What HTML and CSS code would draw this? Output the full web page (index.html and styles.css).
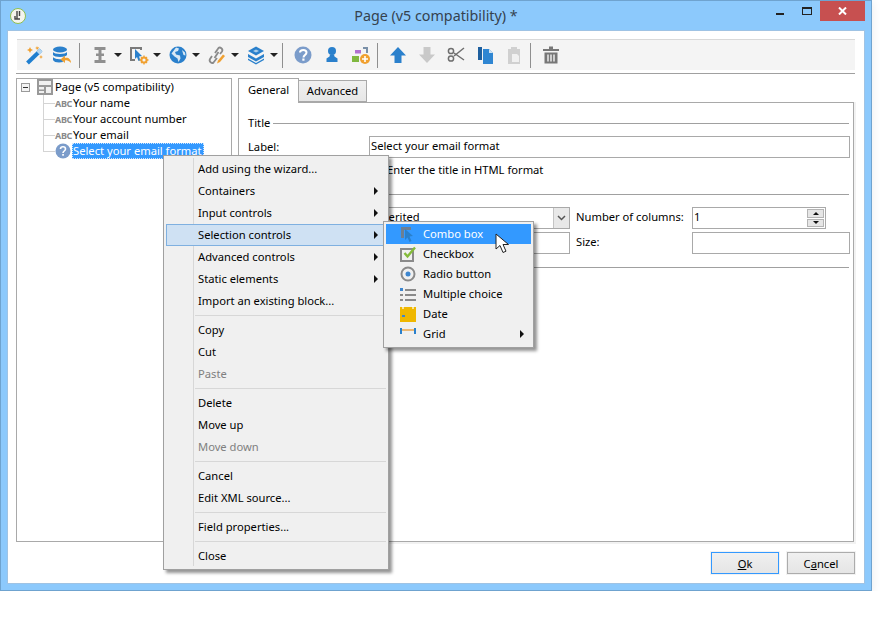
FILE: index.html
```html
<!DOCTYPE html>
<html lang="en">
<head>
<meta charset="utf-8">
<title>Page (v5 compatibility) *</title>
<link rel="stylesheet" href="styles.css">
</head>
<body>
<div class="window">
  <header class="titlebar">
    <svg class="app-icon" width="16" height="16" viewBox="0 0 16 16"><circle cx="8" cy="8" r="7.500" fill="#f4f4ee" stroke="#8fbf4f"/><path d="M7 3v8M9.500 3v5M5 8v3h5" fill="none" stroke="#444" stroke-width="1.400"/></svg>
    <span class="title-text">Page (v5 compatibility) *</span>
    <div class="win-controls">
      <span class="win-min"></span>
      <span class="win-max"></span>
      <span class="win-close"><svg width="9" height="8" viewBox="0 0 9 8"><path d="M1 .5l7 7M8 .5l-7 7" stroke="#fff" stroke-width="2"/></svg></span>
    </div>
  </header>
  <div class="client">
    <div class="toolbar">
      <div class="tgroup g8">
        <svg class="ti" viewBox="0 0 20 20"><path d="M3.500 18L17 5" stroke="#1f7fd0" stroke-width="4"/><path d="M14 8l3-3" stroke="#b5d6f0" stroke-width="4"/><path d="M6 2l1 2 2 1-2 1-1 2-1-2-2-1 2-1zM13 1l.6 1.400L15 2l-.6 1.600L13 5l-.6-1.400L11 3l1.400-.6zM17 10l.6 1.400 1.400.6-1.400.6-.6 1.400-.6-1.400-1.400-.6 1.400-.6z" fill="#f0a030"/></svg>
        <svg class="ti" viewBox="0 0 20 20"><ellipse cx="8" cy="4.500" rx="7" ry="3" fill="#2a80cc"/><path d="M1 7c1 2.500 13 2.500 14 0v3c-1 2.500-13 2.500-14 0zM1 12c1 2 7 2.500 9 2l1 3c-4 1-9 .5-10-2z" fill="#2a80cc"/><path d="M19 18c0-4-3-6-6-5v-2.500l-4.500 4 4.500 3.500v-2.500c2-.5 4 .5 6 2.500z" fill="#f0a030"/></svg>
      </div>
      <span class="tsep s7"></span>
      <div class="tgroup g7">
        <div class="tpair">
          <svg class="ti" viewBox="0 0 20 20"><path d="M4.500 2h11v3h-4v3.500H14v2.500h-2.500v4h4v3h-11v-3h4v-4H6V8.500h2.500V5h-4z" fill="#8f8f8f"/></svg>
          <span class="tcaret"></span>
        </div>
        <div class="tpair">
          <svg class="ti" viewBox="0 0 20 20"><path d="M1 2h12v3h-2V4H3v10h3v2H1z" fill="#7a7a7a"/><path d="M6 4l7 7-3 .5 1.500 4-2 .5-1.500-4L6 14z" fill="#2a80cc"/><circle cx="15" cy="15" r="2.600" fill="none" stroke="#f0a030" stroke-width="2"/><path d="M15 10.500V12M15 18v1.500M10.500 15H12M18 15h1.500M12 12l1 1M17 17l1 1M18 12l-1 1M13 17l-1 1" stroke="#f0a030" stroke-width="1.300"/></svg>
          <span class="tcaret"></span>
        </div>
        <div class="tpair">
          <svg class="ti" viewBox="0 0 20 20"><circle cx="10" cy="10" r="8.500" fill="#2a80cc"/><path d="M8 2.500l3 1-1 2.500-3 1 1 2.500 4 1 .5 3-2 3.500-1-3.500-3-2-3-3zM14 5l3 2.500.5 3-2-.5z" fill="#d8e8f5"/></svg>
          <span class="tcaret"></span>
        </div>
        <div class="tpair">
          <svg class="ti" viewBox="0 0 20 20"><path d="M8 8l3.500-5c1.500-1.500 5 1 3.500 3.500L13 9M10 13l-3.500 4.500c-1.500 1.500-5-1-3.500-3.500l2-3M7.500 13l4-6" fill="none" stroke="#8a8a8a" stroke-width="1.800"/><path d="M10 18.500l1-3 5-6 2 1.500-5 6z" fill="#f0a030"/></svg>
          <span class="tcaret"></span>
        </div>
        <div class="tpair">
          <svg class="ti" viewBox="0 0 20 20"><path d="M10 1.500l8 4.500-8 4.500L2 6z" fill="#2a80cc"/><path d="M10 4.500L13 6l-3 1.500L7 6z" fill="#a9cdea"/><path d="M2 9l8 4.500L18 9v3l-8 4.500L2 12z" fill="#2a80cc"/><path d="M2 13.500l8 4.500 8-4.500V15l-8 4.500L2 15z" fill="#2a80cc"/></svg>
          <span class="tcaret"></span>
        </div>
      </div>
      <span class="tsep s4"></span>
      <div class="tgroup g9">
        <svg class="ti" viewBox="0 0 20 20"><circle cx="10" cy="10" r="8.500" fill="#7b9cca"/><path d="M7 7.500c0-3.500 6.500-3.500 6.500 0 0 2.500-3 2.500-3 5" fill="none" stroke="#fff" stroke-width="2"/><rect x="9.300" y="13.500" width="2.200" height="2.200" fill="#fff"/></svg>
        <svg class="ti" viewBox="0 0 20 20"><circle cx="10" cy="6" r="4" fill="#2a80cc"/><path d="M8 9.500h4l.5 2 3 2V17H4.500v-3.500l3-2z" fill="#2a80cc"/></svg>
        <svg class="ti" viewBox="0 0 20 20"><rect x="4" y="5" width="6" height="3.500" fill="#b070d0"/><path d="M12 2h5v6h-2V4h-3z" fill="#7a90a8"/><rect x="1" y="11" width="7" height="6" fill="#80b840"/><circle cx="14" cy="14" r="5" fill="#f0a030"/><path d="M14 11v6M11 14h6" stroke="#fff" stroke-width="1.600"/></svg>
      </div>
      <span class="tsep s6"></span>
      <div class="tgroup g9">
        <svg class="ti" viewBox="0 0 20 20"><path d="M10 2l8 8.500h-4.500V18h-7v-7.500H2z" fill="#2a80cc"/></svg>
        <svg class="ti" viewBox="0 0 20 20"><path d="M10 18l-8-8.500h4.500V2h7v7.500H18z" fill="#c9c9c9"/></svg>
        <svg class="ti" viewBox="0 0 20 20"><path d="M18 3L8 11M18 15L8 8" stroke="#6e6e6e" stroke-width="1.500" fill="none"/><circle cx="5" cy="6" r="2.600" fill="none" stroke="#6e6e6e" stroke-width="1.500"/><circle cx="5" cy="13.500" r="2.600" fill="none" stroke="#6e6e6e" stroke-width="1.500"/></svg>
        <svg class="ti" viewBox="0 0 20 20"><path d="M3 2h4v13H3z" fill="#1e5f9e"/><path d="M8 4h6l4 4v11H8z" fill="#2f86d2"/><path d="M14 4l4 4h-4z" fill="#cfe3f4"/></svg>
        <svg class="ti" viewBox="0 0 20 20"><path d="M4 4h3V2h6v2h3v15H4z" fill="#d0d0d0"/><path d="M8 9h5l2 2v6H8z" fill="#f0f0f0"/></svg>
      </div>
      <span class="tsep s6"></span>
      <svg class="ti" viewBox="0 0 20 20"><path d="M8 1.500h4V4h6v2H2V4h6z" fill="#777"/><path d="M3.500 7.500h13v11h-13z" fill="#777"/><path d="M7 9.500v7M10 9.500v7M13 9.500v7" stroke="#f4f4f4" stroke-width="1.400"/></svg>
    </div>
    <div class="toolbar-rule"></div>

    <div class="panes">
      <div class="tree">
        <div class="tree-lines"></div>
        <div class="node root">
          <span class="expander"></span>
          <svg class="root-icon" width="16" height="16" viewBox="0 0 16 16"><rect width="16" height="16" fill="#999"/><rect x="2" y="2" width="12" height="4" fill="#f0f0f0"/><rect x="2" y="8" width="5" height="2.500" fill="#f0f0f0"/><rect x="2" y="12" width="5" height="2" fill="#f0f0f0"/><rect x="9" y="8" width="5" height="6" fill="#f0f0f0"/></svg>
          <span class="label">Page (v5 compatibility)</span>
        </div>
        <div class="node leaf"><span class="abc">ABC</span><span class="label">Your name</span></div>
        <div class="node leaf"><span class="abc">ABC</span><span class="label">Your account number</span></div>
        <div class="node leaf"><span class="abc">ABC</span><span class="label">Your email</span></div>
        <div class="node leaf">
          <svg class="q-icon" width="16" height="16" viewBox="0 0 16 16"><circle cx="8" cy="8" r="7.500" fill="#7b9cca"/><path d="M5.500 6c0-3 5-3 5 0 0 2-2.500 2-2.500 4" fill="none" stroke="#fff" stroke-width="1.600"/><rect x="7.200" y="11" width="1.700" height="1.700" fill="#fff"/></svg>
          <span class="selected">Select your email format</span>
        </div>
      </div>

      <div class="tabs-area">
        <div class="tabs">
          <span class="tab active">General</span>
          <span class="tab">Advanced</span>
        </div>
        <div class="tab-panel">
          <div class="legend"><span class="lift">Title</span></div>
          <div class="row first-row">
            <span class="field-label">Label:</span>
            <span class="input grow">Select your email format</span>
          </div>
          <div class="check-row">
            <span class="checkbox"></span>
            <span class="lift">Enter the title in HTML format</span>
          </div>
          <div class="legend second"></div>
          <div class="row first-row">
            <span class="field-label"></span>
            <span class="input select">Inherited<span class="select-btn"><svg width="9" height="6" viewBox="0 0 9 6"><path d="M1 1l3.500 3.500L8 1" fill="none" stroke="#555" stroke-width="1.500"/></svg></span></span>
            <span class="side-label">Number of columns:</span>
            <span class="input spin">1<span class="spin-btns"><span class="spin-up"></span><span class="spin-down"></span></span></span>
          </div>
          <div class="row next-row">
            <span class="field-label"></span>
            <span class="input select"></span>
            <span class="side-label">Size:</span>
            <span class="input grow"></span>
          </div>
          <div class="legend second-b"></div>
        </div>
      </div>
    </div>

    <div class="actions">
      <button class="btn default" type="button"><u>O</u>k</button>
      <button class="btn" type="button">C<u>a</u>ncel</button>
    </div>
  </div>

  <div class="menu main-menu">
    <div class="mi">Add using the wizard...</div>
    <div class="mi sub">Containers</div>
    <div class="mi sub">Input controls</div>
    <div class="mi sub hot">Selection controls</div>
    <div class="mi sub">Advanced controls</div>
    <div class="mi sub">Static elements</div>
    <div class="mi">Import an existing block...</div>
    <div class="msep"></div>
    <div class="mi">Copy</div>
    <div class="mi">Cut</div>
    <div class="mi off">Paste</div>
    <div class="msep"></div>
    <div class="mi">Delete</div>
    <div class="mi">Move up</div>
    <div class="mi off">Move down</div>
    <div class="msep"></div>
    <div class="mi">Cancel</div>
    <div class="mi">Edit XML source...</div>
    <div class="msep"></div>
    <div class="mi">Field properties...</div>
    <div class="msep"></div>
    <div class="mi">Close</div>
  </div>

  <div class="menu sub-menu">
    <div class="si hot-blue">
      <svg class="si-icon" viewBox="0 0 16 16"><path d="M1 1h10v3H4v8H1z" fill="#6d7f92"/><path d="M5 3l8 7-3.500.5 2 4.500-2 1-2-4.500L5 14z" fill="#2a80cc"/></svg>
      <span class="lift">Combo box</span>
    </div>
    <div class="si">
      <svg class="si-icon" viewBox="0 0 16 16"><rect x="1" y="3" width="12" height="12" fill="none" stroke="#8a8a8a" stroke-width="2"/><path d="M4.500 7l3 3.500L15 1.500" fill="none" stroke="#84bb3a" stroke-width="2.400"/></svg>
      <span class="lift">Checkbox</span>
    </div>
    <div class="si">
      <svg class="si-icon" viewBox="0 0 16 16"><circle cx="8" cy="8" r="6.500" fill="none" stroke="#8a8a8a" stroke-width="2"/><circle cx="8" cy="8" r="2.500" fill="#3d86cf"/></svg>
      <span class="lift">Radio button</span>
    </div>
    <div class="si">
      <svg class="si-icon" viewBox="0 0 16 16"><path d="M5 3h11v2H5zM5 8h11v2H5zM5 13h11v2H5z" fill="#8a8a8a"/><rect y="2" width="3" height="3" fill="#3d86cf"/><rect y="8" width="3" height="2" fill="#8a8a8a"/><rect y="13" width="3" height="2" fill="#8a8a8a"/></svg>
      <span class="lift">Multiple choice</span>
    </div>
    <div class="si">
      <svg class="si-icon" viewBox="0 0 16 16"><rect y="1" width="16" height="15" fill="#efb700"/><path d="M3 0v3M13 0v3" stroke="#fff" stroke-width="1.200"/><rect x="2" y="9" width="3" height="2" fill="#3d86cf"/></svg>
      <span class="lift">Date</span>
    </div>
    <div class="si sub">
      <svg class="si-icon" viewBox="0 0 16 16"><path d="M1 2v6M15 2v6" stroke="#2a80cc" stroke-width="2"/><path d="M2 4h12" stroke="#e8a040" stroke-width="1.400"/></svg>
      <span class="lift">Grid</span>
    </div>
  </div>

  <svg class="cursor" width="17" height="21" viewBox="0 0 17 21"><path d="M1 1v15l4-3.500 3 7 3-1.300-3-6.700h5.500z" fill="#fff" stroke="#222" stroke-width="1"/></svg>
</div>
</body>
</html>
```
FILE: styles.css
```css
* { box-sizing: border-box; }
html, body { margin: 0; padding: 0; background: #fff; }
body { font-family: "Noto Sans", sans-serif; font-size: 11.2px; color: #000; }

.window {
  position: relative;
  width: 872px;
  height: 591px;
  background: #8cc9fc;
  border: 1px solid #6fa3cf;
  box-shadow: 2px 2px 8px rgba(0,0,0,.06);
}

.titlebar { position: relative; height: 29px; display: flex; align-items: center; justify-content: center; }
.app-icon { position: absolute; left: 9px; top: 7px; }
.title-text { font-size: 14.3px; color: #35424f; margin-top: -1px; }
.win-controls { position: absolute; right: 6px; top: 0; display: flex; align-items: flex-start; }
.win-min { width: 8px; height: 2px; background: #222; margin-top: 12px; margin-right: 18px; }
.win-max { width: 10px; height: 8px; border: 1px solid #222; border-top-width: 2px; margin-top: 6px; margin-right: 8px; }
.win-close { width: 45px; height: 20px; background: #c75050; display: flex; align-items: center; justify-content: center; }

.client {
  width: 858px;
  height: 554px;
  margin-left: 6px;
  background: #fff;
  border: 1px solid #9fc3e4;
  padding: 8px 9px 0 8px;
}

.toolbar {
  height: 31px;
  margin-left: 1px;
  padding-left: 7px;
  background: #f4f4f4;
  border-top: 1px solid #d9d9d9;
  display: flex;
  align-items: center;
}
.toolbar-rule { height: 1px; background: #a0a0a0; margin-top: 3px; }
.tgroup { display: flex; align-items: center; }
.g7 { gap: 7px; }
.g8 { gap: 8px; }
.g9 { gap: 9px; }
.tpair { display: flex; align-items: center; gap: 4px; }
.ti { width: 20px; height: 20px; flex: none; display: block; }
.tcaret { width: 0; height: 0; border-left: 4px solid transparent; border-right: 4px solid transparent; border-top: 4px solid #222; }
.tsep { width: 1px; height: 25px; background: #8f8f8f; margin-right: 10px; }
.s7 { margin-left: 7px; }
.s4 { margin-left: 4px; }
.s6 { margin-left: 6px; }

.panes { display: flex; gap: 6px; height: 464px; margin-top: 4px; }

.tree {
  position: relative;
  width: 216px;
  border: 1px solid #a9a9a9;
  background: #fff;
}
.tree-lines { position: absolute; left: 26px; top: 16px; width: 12px; height: 56px; border-left: 1px solid #d4d4d4; }
.node { position: relative; height: 16px; display: flex; align-items: center; white-space: nowrap; }
.label { padding-bottom: 1px; }
.root { padding-left: 4px; }
.expander { position: relative; width: 9px; height: 9px; border: 1px solid #9a9a9a; background: #f4f4f4; margin-right: 7px; }
.expander::after { content: ""; position: absolute; left: 1px; top: 3px; width: 5px; height: 1px; background: #333; }
.root-icon { margin-right: 2px; }
.leaf { padding-left: 38px; }
.leaf::before { content: ""; position: absolute; left: 26px; top: 8px; width: 12px; height: 1px; background: #d4d4d4; }
.abc { position: relative; width: 18px; font-size: 9px; font-weight: 700; color: #8a8a8a; letter-spacing: -.3px; }
.q-icon { position: relative; margin-right: 1px; }
.selected { width: 132px; background: #3399ff; color: #fff; outline: 1px dotted #cfe6ff; outline-offset: -1px; height: 16px; line-height: 15px; padding: 0 1px; }

.tabs-area { width: 616px; display: flex; flex-direction: column; }
.tabs { display: flex; height: 24px; position: relative; z-index: 1; }
.tab {
  width: 68px;
  height: 22px;
  margin-top: 2px;
  padding-bottom: 1px;
  border: 1px solid #a9a9a9;
  border-left-width: 0;
  background: linear-gradient(#f0f0f0, #e6e6e6);
  display: flex;
  align-items: center;
  justify-content: center;
}
.tab.active { width: 61px; height: 25px; margin-top: 0; padding-bottom: 3px; background: #fff; border-left-width: 1px; border-bottom: 0; }
.tab-panel {
  flex: 1;
  border: 1px solid #a9a9a9;
  padding: 13px 4px 0 9px;
  box-shadow: 1px 1px 0 1px #f2f2f2;
}
.legend { height: 14px; display: flex; align-items: center; gap: 3px; }
.legend::after { content: ""; flex: 1; height: 1px; background: #a0a0a0; }
.lift { padding-bottom: 2px; }
.second { margin-top: 9px; }
.second-b { margin-top: 6px; }
.row { display: flex; align-items: center; height: 22px; }
.first-row { margin-top: 6px; }
.next-row { margin-top: 3px; }
.field-label { width: 121px; flex: none; padding-bottom: 2px; }
.input {
  height: 22px;
  border: 1px solid #a9a9a9;
  background: #fff;
  padding-left: 1px;
  line-height: 18px;
  display: flex;
  position: relative;
}
.grow { flex: 1; margin-right: -1px; }
.select { width: 201px; flex: none; justify-content: space-between; }
.select-btn { width: 16px; height: 20px; background: #e8e8e8; border-left: 1px solid #c4c4c4; display: flex; align-items: center; justify-content: center; }
.side-label { width: 122px; flex: none; padding: 0 0 3px 6px; white-space: nowrap; }
.spin { width: 134px; flex: none; justify-content: space-between; }
.spin-btns { width: 17px; height: 18px; margin: 1px; display: flex; flex-direction: column; gap: 1px; }
.spin-up, .spin-down { flex: 1; background: #e6e6e6; border: 1px solid #b4b4b4; display: flex; align-items: center; justify-content: center; }
.spin-up::after { content: ""; border-left: 3px solid transparent; border-right: 3px solid transparent; border-bottom: 3px solid #111; }
.spin-down::after { content: ""; border-left: 3px solid transparent; border-right: 3px solid transparent; border-top: 3px solid #111; }
.check-row { display: flex; align-items: center; height: 16px; margin-top: 4px; padding-left: 121px; gap: 5px; }
.checkbox { width: 13px; height: 13px; border: 1px solid #a9a9a9; background: #fff; }

.actions { display: flex; justify-content: flex-end; gap: 8px; margin-top: 10px; }
.btn {
  width: 68px;
  height: 22px;
  padding: 0;
  font: inherit;
  color: #000;
  border: 1px solid #acacac;
  background: linear-gradient(#f0f0f0, #e5e5e5);
  box-shadow: 0 0 0 1px #f2f2f2;
}
.btn.default { border-color: #3399ff; }

.menu {
  position: absolute;
  background: #f0f0f0;
  border: 1px solid #a0a0a0;
  box-shadow: 3px 3px 3px rgba(0,0,0,.42);
}
.main-menu { left: 162px; top: 154px; width: 226px; height: 415px; padding: 2px 2px 3px; z-index: 2; }
.main-menu::before { content: ""; position: absolute; left: 29px; top: 2px; bottom: 3px; width: 1px; background: #d7d7d7; }
.mi { position: relative; height: 22px; line-height: 21px; padding-left: 32px; }
.mi.hot { background: #cfe1f3; outline: 1px solid #7fb0e0; outline-offset: -1px; margin-right: 2px; }
.mi.off { color: #7f7f7f; }
.msep { position: relative; height: 1px; background: #d7d7d7; margin: 3px 0 3px 29px; }
.sub::after { content: ""; position: absolute; right: 8px; top: 7px; border-top: 4px solid transparent; border-bottom: 4px solid transparent; border-left: 4px solid #111; }
.mi.hot.sub::after { right: 6px; }

.sub-menu { left: 382px; top: 220px; width: 151px; height: 127px; padding: 2px; z-index: 3; }
.si { position: relative; height: 20px; display: flex; align-items: center; padding-left: 14px; gap: 7px; }
.si-icon { width: 16px; height: 16px; flex: none; }
.hot-blue { background: #3399ff; color: #fff; }
.sub-menu .sub::after { right: 7px; top: 6px; }

.cursor { position: absolute; left: 494px; top: 232px; z-index: 4; }
```
